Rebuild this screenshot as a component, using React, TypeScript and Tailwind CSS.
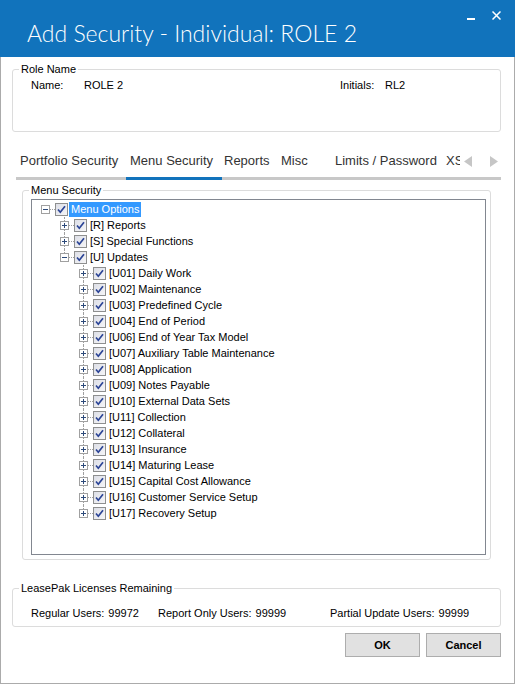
import React from "react";

type Row = {
  level: number;
  label: string;
  expanded?: boolean;
  hasNext: boolean;
  selected?: boolean;
};

const updates = [
  "[U01] Daily Work",
  "[U02] Maintenance",
  "[U03] Predefined Cycle",
  "[U04] End of Period",
  "[U06] End of Year Tax Model",
  "[U07] Auxiliary Table Maintenance",
  "[U08] Application",
  "[U09] Notes Payable",
  "[U10] External Data Sets",
  "[U11] Collection",
  "[U12] Collateral",
  "[U13] Insurance",
  "[U14] Maturing Lease",
  "[U15] Capital Cost Allowance",
  "[U16] Customer Service Setup",
  "[U17] Recovery Setup",
];

const rows: Row[] = [
  { level: 0, label: "Menu Options", expanded: true, hasNext: false, selected: true },
  { level: 1, label: "[R] Reports", hasNext: true },
  { level: 1, label: "[S] Special Functions", hasNext: true },
  { level: 1, label: "[U] Updates", expanded: true, hasNext: false },
  ...updates.map((label, i) => ({ level: 2, label, hasNext: i < updates.length - 1 })),
];

function Expander({ open }: { open?: boolean }) {
  return (
    <svg width="9" height="9" viewBox="0 0 9 9" className="block">
      <rect x="0.5" y="0.5" width="8" height="8" fill="#fff" stroke="#a0a0a0" />
      <line x1="2" y1="4.5" x2="7" y2="4.5" stroke="#2d4a7a" />
      {!open && <line x1="4.5" y1="2" x2="4.5" y2="7" stroke="#2d4a7a" />}
    </svg>
  );
}

function Check() {
  return (
    <svg width="13" height="13" viewBox="0 0 13 13" className="block shrink-0">
      <defs>
        <linearGradient id="cbg" x1="0" y1="0" x2="1" y2="1">
          <stop offset="0" stopColor="#dcdee6" />
          <stop offset="1" stopColor="#f6f6f8" />
        </linearGradient>
      </defs>
      <rect x="0.5" y="0.5" width="12" height="12" fill="url(#cbg)" stroke="#8e8f8f" />
      <path d="M3 6.5 L5.3 9.2 L10 3.2" fill="none" stroke="#2b4496" strokeWidth="1.7" />
    </svg>
  );
}

function TreeRow({ row }: { row: Row }) {
  return (
    <div className="flex h-[16px] items-center">
      <div style={{ width: row.level * 19 }} className="shrink-0" />
      <div className="relative h-[16px] w-[19px] shrink-0">
        {row.level > 0 && (
          <div className="absolute left-[9px] top-0 h-[8px] border-l border-dotted border-[#a0a0a0]" />
        )}
        {row.hasNext && (
          <div className="absolute left-[9px] top-[8px] h-[8px] border-l border-dotted border-[#a0a0a0]" />
        )}
        <div className="absolute left-[10px] top-[8px] w-[9px] border-t border-dotted border-[#a0a0a0]" />
        <div className="absolute left-[5px] top-[4px]">
          <Expander open={row.expanded} />
        </div>
      </div>
      <Check />
      <span
        className={
          row.selected
            ? "ml-[1px] bg-[#3399ff] px-[2px] leading-[15px] text-white"
            : "ml-[1px] px-[2px] leading-[15px] text-black"
        }
      >
        {row.label}
      </span>
    </div>
  );
}

function Arrow({ dir }: { dir: "l" | "r" }) {
  return (
    <svg width="10" height="11" viewBox="0 0 10 11" className="block">
      <path d={dir === "l" ? "M9 0 L9 11 L1 5.5 Z" : "M1 0 L1 11 L9 5.5 Z"} fill="#c6c6c6" />
    </svg>
  );
}

const tabs = [
  { label: "Portfolio Security", cls: "w-[110px] pl-[4px]" },
  { label: "Menu Security", cls: "w-[96px] pl-[4px]", active: true },
  { label: "Reports", cls: "w-[57px] pl-[2px]" },
  { label: "Misc", cls: "w-[54px] pl-[2px]" },
  { label: "Limits / Password", cls: "w-[109px] pl-[2px]" },
  { label: "XS", cls: "w-[18px] pl-[4px] overflow-hidden" },
];

export default function App() {
  return (
    <div className="flex h-[684px] w-[515px] flex-col bg-white font-['Liberation_Sans',Arial,sans-serif] text-[11px] text-black">
      {/* title bar */}
      <div className="flex h-[57px] shrink-0 bg-[#1173bc] text-white">
        <div className="pl-[27px] pt-[19px] font-['Lato',sans-serif] text-[23px] font-light leading-[28px]">
          Add Security - Individual: ROLE 2
        </div>
        <div className="ml-auto flex items-start gap-[17px] pr-[14px] pt-[11px]">
          <svg width="8" height="10" viewBox="0 0 8 10">
            <rect x="0" y="7" width="8" height="2" fill="#fff" />
          </svg>
          <svg width="9" height="9" viewBox="0 0 9 9">
            <path d="M0.5 0.5 L8.5 8.5 M8.5 0.5 L0.5 8.5" stroke="#fff" strokeWidth="1.5" />
          </svg>
        </div>
      </div>

      <div className="flex flex-1 flex-col border-x border-b border-[#ababab]">
        {/* Role Name */}
        <fieldset className="ml-[11px] mr-[13px] mt-[6px] h-[69px] rounded-[3px] border border-[#dcdcdc]">
          <legend className="ml-[6px] px-[2px] leading-[13px]">Role Name</legend>
          <div className="mt-[3px] flex pl-[18px] leading-[13px]">
            <span className="w-[53px]">Name:</span>
            <span className="w-[256px]">ROLE 2</span>
            <span className="w-[45px]">Initials:</span>
            <span>RL2</span>
          </div>
        </fieldset>

        {/* tabs */}
        <div className="ml-[15px] mr-[13px] mt-[21px] flex flex-col">
          <div className="flex items-center text-[13px] leading-[16px] text-[#333]">
            {tabs.map((t) => (
              <div key={t.label} className={`${t.cls} shrink-0 whitespace-nowrap`}>
                {t.label}
              </div>
            ))}
            <div className="ml-auto flex items-center gap-[16px] pr-[2px]">
              <Arrow dir="l" />
              <Arrow dir="r" />
            </div>
          </div>
          <div className="mt-[8px] flex h-[3px] bg-[#c8c8c8]">
            <div className="w-[110px]" />
            <div className="w-[96px] bg-[#1173bc]" />
          </div>
        </div>

        {/* Menu Security */}
        <fieldset className="ml-[21px] mr-[23px] mt-[4px] rounded-[3px] border border-[#dcdcdc] pb-[4px] pl-[8px] pr-[4px]">
          <legend className="ml-[-2px] px-[2px] leading-[13px]">Menu Security</legend>
          <div className="mt-[2px] h-[356px] border border-[#828790] bg-white pl-[4px] pt-[1px]">
            {rows.map((r) => (
              <TreeRow key={r.label} row={r} />
            ))}
          </div>
        </fieldset>

        {/* Licenses */}
        <fieldset className="ml-[11px] mr-[13px] mt-[22px] rounded-[3px] border border-[#dcdcdc] pb-[6px]">
          <legend className="ml-[6px] px-[2px] leading-[13px]">LeasePak Licenses Remaining</legend>
          <div className="mt-[12px] flex pl-[18px] leading-[13px]">
            <span className="w-[127px]">
              Regular Users:<span className="ml-[4px]">99972</span>
            </span>
            <span className="w-[172px]">
              Report Only Users:<span className="ml-[4px]">99999</span>
            </span>
            <span>
              Partial Update Users:<span className="ml-[4px]">99999</span>
            </span>
          </div>
        </fieldset>

        {/* buttons */}
        <div className="mr-[13px] mt-[6px] flex justify-end gap-[6px]">
          <button className="h-[24px] w-[75px] border border-[#adadad] bg-[#e1e1e1] font-bold">OK</button>
          <button className="h-[24px] w-[75px] border border-[#adadad] bg-[#e1e1e1] font-bold">Cancel</button>
        </div>
      </div>
    </div>
  );
}
